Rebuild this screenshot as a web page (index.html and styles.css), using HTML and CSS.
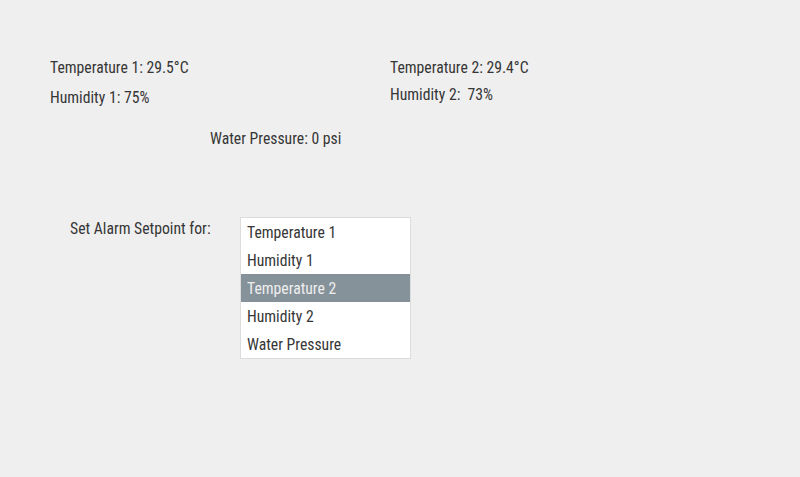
FILE: index.html
```html
<!DOCTYPE html>
<html lang="en">
<head>
    <meta charset="UTF-8">
    <meta name="viewport" content="width=device-width, initial-scale=1.0">
    <title>Sensor Monitor</title>
    <link rel="stylesheet" href="styles.css">
</head>
<body>
    <div class="page">
        <div class="readings">
            <div class="sensor sensor-1">
                <p>Temperature 1: 29.5°C</p>
                <p>Humidity 1: 75%</p>
            </div>
            <div class="sensor sensor-2">
                <p>Temperature 2: 29.4°C</p>
                <p>Humidity 2:&nbsp; 73%</p>
            </div>
        </div>

        <p class="pressure">Water Pressure: 0 psi</p>

        <div class="alarm">
            <label class="alarm-label">Set Alarm Setpoint for:</label>
            <ul class="listbox">
                <li>Temperature 1</li>
                <li>Humidity 1</li>
                <li class="selected">Temperature 2</li>
                <li>Humidity 2</li>
                <li>Water Pressure</li>
            </ul>
        </div>
    </div>
</body>
</html>
```

FILE: styles.css
```css
* {
    margin: 0;
    padding: 0;
    box-sizing: border-box;
}

body {
    font-family: 'Roboto Condensed', 'Roboto', sans-serif;
    font-size: 15.7px;
    background: #efefef;
    color: #363636;
}

.page {
    width: 800px;
    height: 477px;
    padding-top: 53px;
}

.readings {
    display: flex;
    align-items: flex-start;
    padding-left: 50px;
}

.sensor-1 {
    width: 340px;
    line-height: 30px;
}

.sensor-2 {
    margin-top: 1px;
    line-height: 27px;
}

.pressure {
    margin-top: 11px;
    padding-left: 210px;
    line-height: 30px;
}

.alarm {
    display: flex;
    align-items: flex-start;
    margin-top: 63px;
    padding-left: 70px;
}

.alarm-label {
    width: 170px;
    line-height: 24px;
}

.listbox {
    list-style: none;
    width: 171px;
    background: #ffffff;
    border: 1px solid #dcdcdc;
}

.listbox li {
    height: 28px;
    line-height: 30px;
    padding-left: 6px;
    overflow: hidden;
    color: #363636;
}

.listbox li.selected {
    background: #86929a;
    color: #eeeeee;
}
```
